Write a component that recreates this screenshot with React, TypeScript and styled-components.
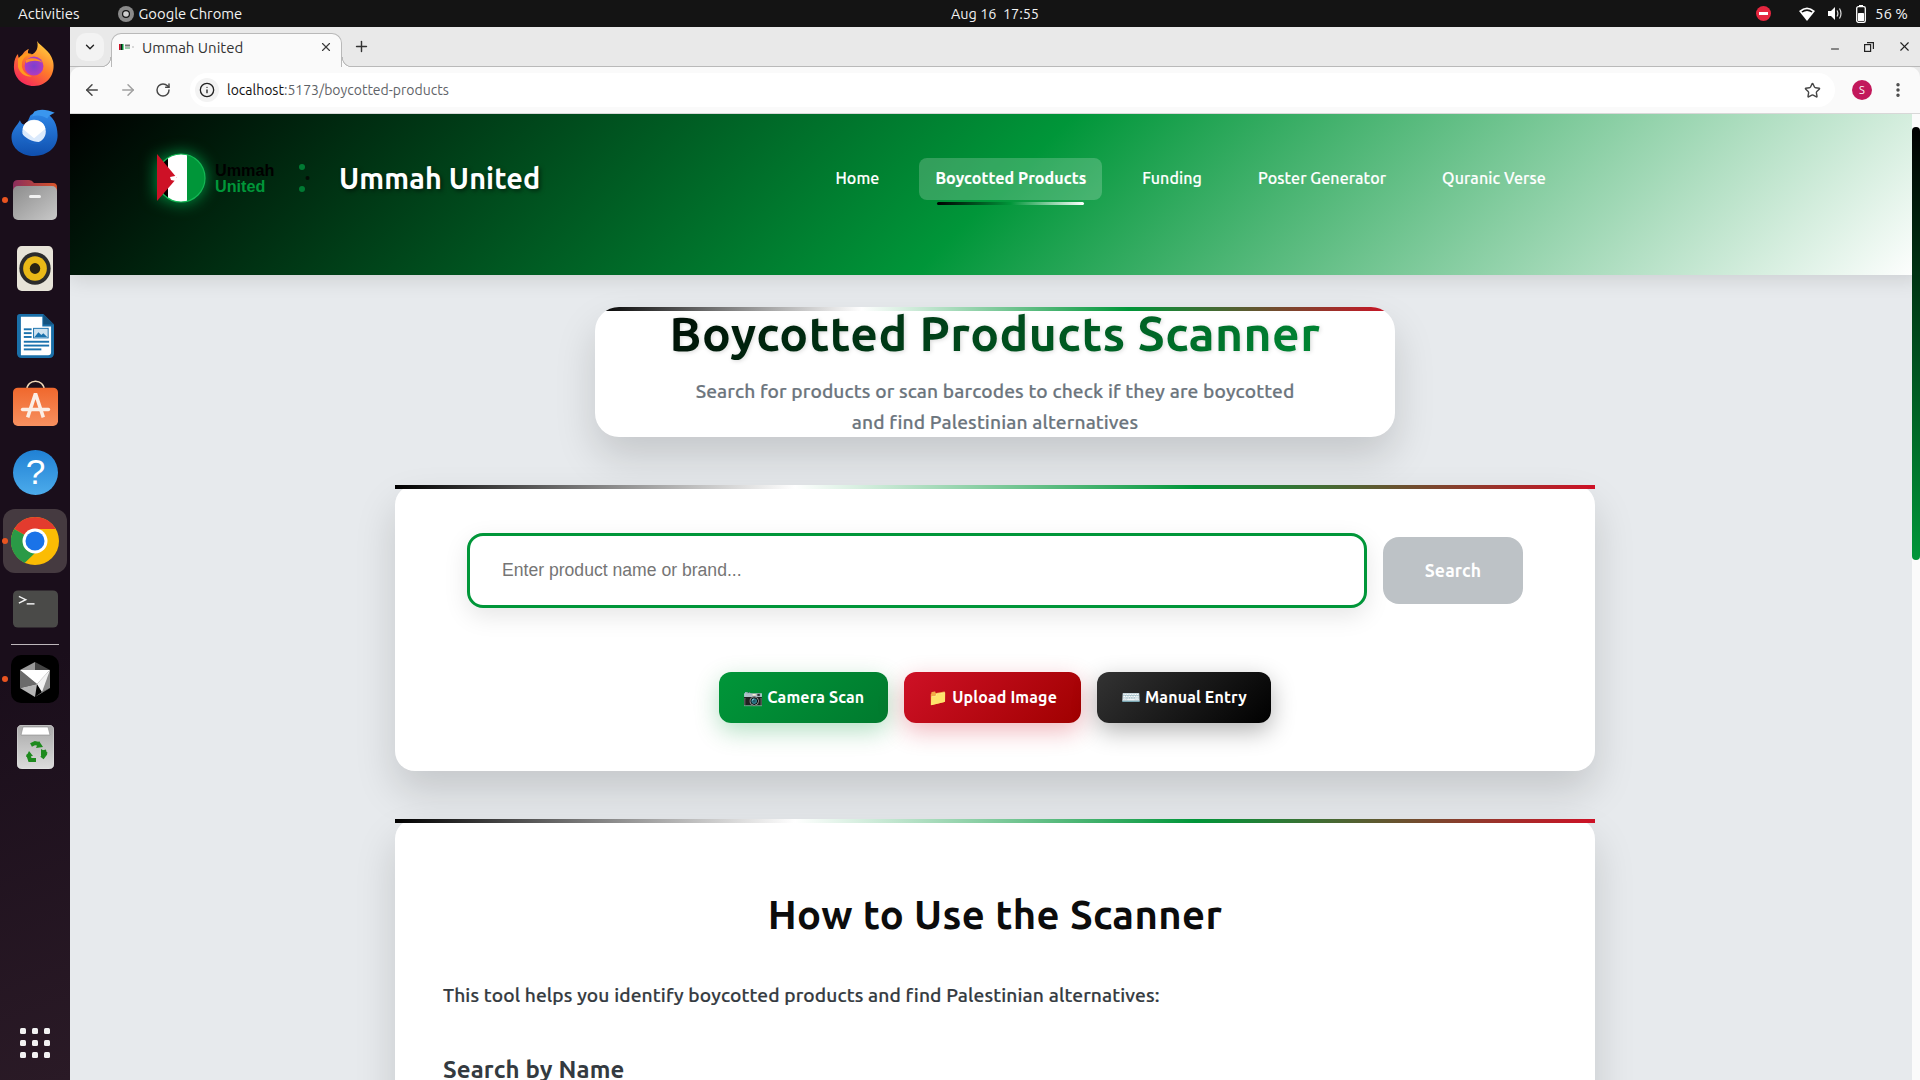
import React from "react";
import styled, { createGlobalStyle } from "styled-components";
import { ArrowLeft, ArrowRight, ChevronDown, EllipsisVertical, Info, Minus, Plus, RotateCw, Star, X } from "lucide-react";

const uiFont = `"Ubuntu", "Lato", "Noto Sans", sans-serif`;
const tracking = "0.008em";

const GlobalStyle = createGlobalStyle`
	html, body {
		margin: 0;
		padding: 0;
		width: 1920px;
		height: 1080px;
		overflow: hidden;
		font-family: ${uiFont};
	}
	* {
		box-sizing: border-box;
	}
`;

const App: React.FC = () => {
	return (
		<Desktop>
			<GlobalStyle />
			<TopBar>
				<TopLeft>
					<TopLabel>Activities</TopLabel>
					<AppName>
						<ChromeGrey />
						<AppLabel>Google Chrome</AppLabel>
					</AppName>
				</TopLeft>
				<TopClock>Aug 16&nbsp;&nbsp;17:55</TopClock>
				<TopRight>
					<DndIcon />
					<WifiIcon />
					<VolumeIcon />
					<BatteryIcon />
					<BatteryText>56 %</BatteryText>
				</TopRight>
			</TopBar>
			<Workspace>
				<Dock>
					<DockItem><FirefoxIcon /></DockItem>
					<DockItem><ThunderbirdIcon /></DockItem>
					<DockItem $running><FilesIcon /></DockItem>
					<DockItem><RhythmboxIcon /></DockItem>
					<DockItem><WriterIcon /></DockItem>
					<DockItem><StoreIcon /></DockItem>
					<DockItem><HelpIcon /></DockItem>
					<DockItem $running $active><ChromeIcon /></DockItem>
					<DockItem><TerminalIcon /></DockItem>
					<DockRule />
					<DockItem $running><CubeIcon /></DockItem>
					<DockItem><TrashIcon /></DockItem>
					<AppGrid>
						{Array.from({ length: 9 }).map((_, i) => (
							<AppGridDot key={i} />
						))}
					</AppGrid>
				</Dock>
				<Browser>
					<TabStrip>
						<TabSearch><ChevronDown size={14} strokeWidth={2.4} /></TabSearch>
						<Tab>
							<Favicon />
							<TabTitle>Ummah United</TabTitle>
							<X size={14} strokeWidth={2} color="#3c3c3c" />
						</Tab>
						<NewTab><Plus size={17} strokeWidth={2} /></NewTab>
						<WindowButtons>
							<MinimizeSlot><Minus size={12} strokeWidth={2} /></MinimizeSlot>
							<RestoreIcon />
							<X size={15} strokeWidth={1.8} />
						</WindowButtons>
					</TabStrip>
					<Toolbar>
						<NavIcons>
							<ArrowLeft size={18} strokeWidth={2} color="#474747" />
							<ArrowRight size={18} strokeWidth={2} color="#a0a0a0" />
							<RotateCw size={16} strokeWidth={2.2} color="#474747" />
						</NavIcons>
						<Omnibox>
							<InfoBadge><Info size={16} strokeWidth={2} color="#222" /></InfoBadge>
							<UrlHost>localhost</UrlHost>
							<UrlRest>:5173/boycotted-products</UrlRest>
							<StarSlot><Star size={17} strokeWidth={2} color="#474747" /></StarSlot>
						</Omnibox>
						<Avatar>S</Avatar>
						<EllipsisVertical size={18} strokeWidth={2.6} color="#474747" />
					</Toolbar>
					<Page>
						<SiteHeader>
							<Brand>
								<LogoImage>
									<LogoMark />
									<LogoWords>
										<span>Ummah</span>
										<LogoGreen>United</LogoGreen>
									</LogoWords>
									<LogoDots />
								</LogoImage>
								<BrandName>Ummah United</BrandName>
							</Brand>
							<Nav>
								<NavLink>Home</NavLink>
								<NavLink $active>Boycotted Products</NavLink>
								<NavLink>Funding</NavLink>
								<NavLink>Poster Generator</NavLink>
								<NavLink>Quranic Verse</NavLink>
							</Nav>
						</SiteHeader>
						<Content>
							<Hero>
								<HeroTitle>Boycotted Products Scanner</HeroTitle>
								<HeroText>Search for products or scan barcodes to check if they are boycotted and find Palestinian alternatives</HeroText>
							</Hero>
							<SearchCard>
								<SearchRow>
									<SearchInput placeholder="Enter product name or brand..." readOnly />
									<SearchButton>Search</SearchButton>
								</SearchRow>
								<ScanRow>
									<ScanButton $kind="green"><Emoji>📷</Emoji> Camera Scan</ScanButton>
									<ScanButton $kind="red"><Emoji>📁</Emoji> Upload Image</ScanButton>
									<ScanButton $kind="black"><Emoji>⌨️</Emoji> Manual Entry</ScanButton>
								</ScanRow>
							</SearchCard>
							<GuideCard>
								<GuideTitle>How to Use the Scanner</GuideTitle>
								<GuideText>This tool helps you identify boycotted products and find Palestinian alternatives:</GuideText>
								<GuideHeading>Search by Name</GuideHeading>
							</GuideCard>
						</Content>
						<ScrollTrack>
							<ScrollThumb />
						</ScrollTrack>
					</Page>
				</Browser>
			</Workspace>
		</Desktop>
	);
};

// DRAWN ICONS
const ChromeGrey = () => (
	<svg width="16" height="16" viewBox="0 0 16 16">
		<circle cx="8" cy="8" r="8" fill="#8a8a8a" />
		<circle cx="8" cy="8" r="4" fill="#141414" />
		<circle cx="8" cy="8" r="2.8" fill="#cfcfcf" />
	</svg>
);

const DndIcon = () => (
	<svg width="15" height="15" viewBox="0 0 15 15" style={{ marginRight: 15 }}>
		<circle cx="7.5" cy="7.5" r="7.5" fill="#e5263f" />
		<rect x="3" y="6" width="9" height="3" fill="#fff" />
	</svg>
);

const WifiIcon = () => (
	<svg width="16" height="14" viewBox="0 0 16 14">
		<path d="M0 4 Q8 -3 16 4 L8 14 Z" fill="#fff" />
		<path d="M2.4 4.4 Q8 0.2 13.6 4.4 L12.6 5.6 Q8 2.4 3.4 5.6 Z" fill="#141414" />
	</svg>
);

const VolumeIcon = () => (
	<svg width="15" height="15" viewBox="0 0 15 15" fill="none">
		<path d="M0 5 H3 L7 1 V14 L3 10 H0 Z" fill="#fff" />
		<path d="M9 4.5 Q10.8 7.5 9 10.5 M11.5 2.5 Q14.5 7.5 11.5 12.5" stroke="#ddd" strokeWidth="1.2" />
	</svg>
);

const BatteryIcon = () => (
	<svg width="10" height="18" viewBox="0 0 10 18" fill="none">
		<rect x="3" y="0" width="4" height="2" fill="#fff" />
		<rect x="0.7" y="1.7" width="8.6" height="15.6" rx="1.6" stroke="#fff" strokeWidth="1.3" />
		<rect x="2" y="8" width="6" height="8" rx="0.6" fill="#fff" />
	</svg>
);

const RestoreIcon = () => (
	<svg width="10" height="10" viewBox="0 0 10 10" fill="none" stroke="#222" strokeWidth="1.2">
		<rect x="0.6" y="2.6" width="6" height="6.8" />
		<path d="M3 0.6 H9.4 V7" />
	</svg>
);

const Favicon = () => (
	<svg width="16" height="8" viewBox="0 0 16 8">
		<rect x="0" y="1" width="1.5" height="6" fill="#ce1126" />
		<rect x="1.5" y="1" width="1.5" height="6" fill="#111" />
		<rect x="3" y="1" width="1.5" height="6" fill="#009639" />
		<rect x="6" y="1.5" width="5" height="2" fill="#777" />
		<rect x="6" y="4" width="5" height="2" fill="#9dc9ac" />
		<circle cx="14" cy="4" r="1" fill="#ccc" />
	</svg>
);

const LogoMark = () => (
	<LogoGlow width="60" height="64" viewBox="11 0 60 64">
		<defs>
			<clipPath id="logoCircle">
				<circle cx="35" cy="32" r="24" />
			</clipPath>
		</defs>
		<g clipPath="url(#logoCircle)">
			<rect x="0" y="0" width="60" height="64" fill="#009639" />
			<rect x="0" y="0" width="22" height="64" fill="#000" />
			<rect x="22" y="0" width="19" height="64" fill="#fff" />
		</g>
		<circle cx="35" cy="32" r="24" fill="none" stroke="#14b855" strokeWidth="1.2" />
		<polygon points="11,8 11,55 31,32" fill="#ce1126" />
		<path d="M24 31 L34 29 L30 32 L40 31 L30 34 L34 36 L25 34 Z" fill="#fff" />
	</LogoGlow>
);

const LogoDots = () => (
	<svg width="12" height="30" viewBox="0 0 12 30">
		<circle cx="3" cy="4" r="3" fill="#007a33" />
		<circle cx="8.5" cy="15" r="2" fill="#040c06" />
		<circle cx="3" cy="26" r="3" fill="#007a33" />
	</svg>
);

const FirefoxIcon = () => (
	<svg width="46" height="46" viewBox="0 0 46 46">
		<defs>
			<linearGradient id="ffOuter" x1="0.8" y1="0" x2="0.2" y2="1">
				<stop offset="0" stopColor="#ffd640" />
				<stop offset="0.5" stopColor="#ff7a2b" />
				<stop offset="1" stopColor="#f5215f" />
			</linearGradient>
			<radialGradient id="ffCore">
				<stop offset="0" stopColor="#7b3fd0" />
				<stop offset="1" stopColor="#b13bc0" />
			</radialGradient>
		</defs>
		<path d="M25 0 C29 6 38 9 41 20 C44 32 36 45 22 45 C9 45 1 35 2 24 C2 19 4 15 6 13 C6 16 7 18 9 19 C9 14 13 9 17 8 C15 11 16 14 19 14 C24 12 27 7 25 0 Z" fill="url(#ffOuter)" />
		<path d="M6 18 C12 10 18 12 22 14 C16 13 11 16 10 22 C9 28 13 34 20 35 C15 37 8 33 6 26 Z" fill="#ff9a1f" />
		<circle cx="22" cy="25" r="9.5" fill="url(#ffCore)" />
		<path d="M14 19 C19 16 27 17 31 22 C26 19 20 19 14 22 Z" fill="#ff8f2a" />
	</svg>
);

const ThunderbirdIcon = () => (
	<svg width="48" height="47" viewBox="0 0 50 50" style={{ marginTop: 1 }}>
		<defs>
			<linearGradient id="tbBlue" x1="0.5" y1="0" x2="0.5" y2="1">
				<stop offset="0" stopColor="#2f88e8" />
				<stop offset="1" stopColor="#0f4fae" />
			</linearGradient>
		</defs>
		<path d="M9 12 C6 18 0 22 0 30 C0 42 11 50 24 50 C38 50 49 41 49 28 C49 16 44 7 36 5 C32 1 25 2 20 7 C18 12 16 15 15 17 C12 17 10 15 9 12 Z" fill="url(#tbBlue)" />
		<path d="M24 3 C29 0 37 0 46 4 C42 6 40 7 38 10 C33 7 27 6 22 8 Z" fill="#3a96ee" />
		<circle cx="24" cy="24" r="12.5" fill="#dbeafc" />
		<path d="M12 21 L24 31 L36 21 C35 15 30 12 24 12 C18 12 13 15 12 21 Z" fill="#fff" />
		<path d="M9 24 C11 39 32 42 42 30 C34 37 20 38 9 24 Z" fill="#1a63c4" />
	</svg>
);

const FilesIcon = () => (
	<svg width="44" height="40" viewBox="0 0 44 40">
		<defs>
			<linearGradient id="folderTop" x1="0" y1="0" x2="1" y2="0">
				<stop offset="0" stopColor="#8a2d5c" />
				<stop offset="1" stopColor="#d8552a" />
			</linearGradient>
			<linearGradient id="folderBody" x1="0" y1="0" x2="1" y2="1">
				<stop offset="0" stopColor="#8d8d8d" />
				<stop offset="1" stopColor="#c8c8c8" />
			</linearGradient>
		</defs>
		<path d="M0 5 Q0 0 5 0 H16 Q19 0 21 3 H40 Q44 3 44 7 V20 H0 Z" fill="url(#folderTop)" />
		<rect x="0" y="6" width="44" height="34" rx="5" fill="url(#folderBody)" />
		<rect x="16" y="15" width="12" height="3" rx="1.5" fill="#f2f2f2" />
	</svg>
);

const RhythmboxIcon = () => (
	<svg width="36" height="45" viewBox="0 0 38 46" preserveAspectRatio="none">
		<rect width="38" height="46" rx="5" fill="#e7e3d8" />
		<circle cx="19" cy="23" r="16.5" fill="#2c2c2c" />
		<circle cx="19" cy="23" r="12.5" fill="#eab917" />
		<circle cx="19" cy="23" r="5.5" fill="#2a2414" />
	</svg>
);

const WriterIcon = () => (
	<svg width="37" height="44" viewBox="0 0 38 46" preserveAspectRatio="none">
		<path d="M3 0 H27 L38 11 V41 Q38 46 33 46 H5 Q0 46 0 41 V3 Q0 0 3 0 Z" fill="#1a6fa8" />
		<path d="M27 0 L38 11 H27 Z" fill="#14527e" />
		<path d="M4 3 H26 V13 H35 V40 Q35 43 32 43 H4 Z" fill="#fff" />
		<g fill="#1a72ad">
			<rect x="7" y="15" width="8" height="2" />
			<rect x="7" y="19" width="8" height="2" />
			<rect x="7" y="23" width="8" height="2" />
			<rect x="7" y="28" width="26" height="2" />
			<rect x="7" y="32" width="26" height="2" />
			<rect x="7" y="36" width="18" height="2" />
		</g>
		<rect x="17" y="15" width="15" height="10" fill="#cfe3f0" stroke="#1a72ad" />
		<path d="M18 24 L22 19 L25 22 L27 20 L31 24 Z" fill="#1a72ad" />
	</svg>
);

const StoreIcon = () => (
	<svg width="45" height="46" viewBox="0 0 46 48" preserveAspectRatio="none" style={{ marginTop: -4 }}>
		<defs>
			<linearGradient id="bag" x1="0" y1="0" x2="0" y2="1">
				<stop offset="0" stopColor="#f0682d" />
				<stop offset="1" stopColor="#f79060" />
			</linearGradient>
		</defs>
		<path d="M14 11 C14 -2 32 -2 32 11" fill="none" stroke="#f0d9b8" strokeWidth="1.6" />
		<rect y="8" width="46" height="40" rx="5" fill="url(#bag)" />
		<path d="M23 14 L15 39 M23 14 L31 39" stroke="#fbeee6" strokeWidth="3.6" />
		<rect x="8" y="29" width="30" height="3.6" rx="1.8" fill="#fbeee6" />
	</svg>
);

const HelpIcon = () => (
	<svg width="45" height="45" viewBox="0 0 46 46">
		<defs>
			<linearGradient id="help" x1="0" y1="0" x2="0" y2="1">
				<stop offset="0" stopColor="#2081d4" />
				<stop offset="1" stopColor="#4cabeb" />
			</linearGradient>
		</defs>
		<circle cx="23" cy="23" r="23" fill="url(#help)" />
		<text x="23" y="35" textAnchor="middle" fontSize="36" fontFamily="Liberation Sans, sans-serif" fill="#fff">?</text>
	</svg>
);

const ChromeIcon = () => (
	<svg width="48" height="48" viewBox="0 0 48 48">
		<circle cx="24" cy="24" r="24" fill="#fbbc04" />
		<path d="M24 0 A24 24 0 0 1 44.8 12 L24 12 A12 12 0 0 0 13.6 18 L3.2 12 A24 24 0 0 1 24 0 Z" fill="#e33b2e" />
		<path d="M3.2 12 L13.6 18 A12 12 0 0 0 24 36 L13.6 46 A24 24 0 0 1 3.2 12 Z" fill="#2a9a46" />
		<circle cx="24" cy="24" r="12.5" fill="#fff" />
		<circle cx="24" cy="24" r="9.5" fill="#1a73e8" />
	</svg>
);

const TerminalIcon = () => (
	<svg width="45" height="38" viewBox="0 0 46 38">
		<rect width="46" height="38" rx="5" fill="#4a4a48" />
		<path d="M6 6 L13 9.5 L6 13" fill="none" stroke="#f2f2f2" strokeWidth="1.5" />
		<rect x="14" y="13" width="8" height="1.5" fill="#f2f2f2" />
	</svg>
);

const CubeIcon = () => (
	<svg width="48" height="48" viewBox="0 0 48 48">
		<rect width="48" height="48" rx="10" fill="#000" />
		<polygon points="24,7 9,15 24,15" fill="#9a9a9a" />
		<polygon points="24,7 39,15 24,15" fill="#454545" />
		<polygon points="9,15 9,33 26,29" fill="#6a6a6a" />
		<polygon points="9,33 24,42 26,29" fill="#b4b4b4" />
		<polygon points="39,15 39,33 31,37 26,29" fill="#8c8c8c" />
		<polygon points="39,15 31,37 26,29" fill="#f2f2f2" />
		<polygon points="24,42 39,33 31,37" fill="#a8a8a8" />
		<polygon points="9,15 39,15 26,29" fill="#fff" />
	</svg>
);

const TrashIcon = () => (
	<svg width="37" height="44" viewBox="0 0 37 44">
		<defs>
			<linearGradient id="bin" x1="0" y1="0" x2="0" y2="1">
				<stop offset="0" stopColor="#a9a9a9" />
				<stop offset="1" stopColor="#dcdcdc" />
			</linearGradient>
		</defs>
		<rect width="37" height="44" rx="5" fill="url(#bin)" stroke="#efefef" strokeWidth="0.6" />
		<path d="M6 2 H31 L33 10 H4 Z" fill="#fff" stroke="#888" strokeWidth="0.6" />
		<g fill="none" stroke="#1e8a1e" strokeWidth="4">
			<path d="M14 20 L18 18 L22 19" />
			<path d="M27 25 L28 29 L25 33" />
			<path d="M19 35 L13 35 L11 29" />
		</g>
		<g fill="#1e8a1e">
			<polygon points="22,16 26,22 19,23" />
			<polygon points="31,28 24,31 24,24" />
			<polygon points="9,32 12,26 16,31" />
		</g>
	</svg>
);

// LAYOUT
const Desktop = styled.div`
	width: 1920px;
	height: 1080px;
	display: flex;
	flex-direction: column;
	overflow: hidden;
	background: #1d0f1f;
`;

const TopBar = styled.header`
	height: 27px;
	flex: none;
	background: #141414;
	color: #f2f2f2;
	display: grid;
	grid-template-columns: 1fr auto 1fr;
	align-items: center;
	padding: 0 12px 0 18px;
`;

const TopLeft = styled.div`
	display: flex;
	align-items: center;
	gap: 36px;
`;

const AppName = styled.div`
	display: flex;
	align-items: center;
	gap: 5px;
	margin-left: 2px;
`;

const TopLabel = styled.span`
	font-size: 15px;
`;

const AppLabel = styled(TopLabel)`
	font-size: 14.8px;
`;

const BatteryText = styled(TopLabel)`
	margin-left: -4px;
`;

const TopClock = styled.div`
	font-size: 14.4px;
	padding-left: 64px;
`;

const TopRight = styled.div`
	display: flex;
	align-items: center;
	justify-content: flex-end;
	gap: 13px;
`;

const Workspace = styled.div`
	flex: 1;
	display: flex;
	min-height: 0;
`;

const Dock = styled.nav`
	width: 70px;
	flex: none;
	display: flex;
	flex-direction: column;
	align-items: center;
	padding-top: 3px;
	background: linear-gradient(160deg, #1a0e1b 60%, #2a1a26 100%);
`;

const DockItem = styled.div<{ $running?: boolean; $active?: boolean }>`
	position: relative;
	width: 64px;
	height: 68.1px;
	flex: none;
	display: flex;
	align-items: center;
	justify-content: center;

	${({ $active }) =>
		$active &&
		`
		&::before {
			content: "";
			position: absolute;
			inset: 2px 0;
			border-radius: 12px;
			background: #453a40;
		}
		& > svg {
			position: relative;
		}
	`}

	${({ $running }) =>
		$running &&
		`
		&::after {
			content: "";
			position: absolute;
			left: -1px;
			top: 31px;
			width: 6px;
			height: 6px;
			border-radius: 50%;
			background: #e95420;
		}
	`}
`;

const DockRule = styled.div`
	width: 48px;
	height: 1px;
	flex: none;
	margin-top: 1px;
	background: #bdb7bb;
`;

const AppGrid = styled.div`
	margin-top: auto;
	margin-bottom: 22px;
	display: grid;
	grid-template-columns: repeat(3, 6px);
	gap: 6px;
`;

const AppGridDot = styled.span`
	width: 6px;
	height: 6px;
	border-radius: 1.5px;
	background: #f2f2f2;
`;

const Browser = styled.div`
	flex: 1;
	min-width: 0;
	display: flex;
	flex-direction: column;
	background: #e9e9e9;
`;

const TabStrip = styled.div`
	height: 40px;
	flex: none;
	background: #e9e9e9;
	display: flex;
	align-items: flex-end;
	padding-left: 6px;
	border-bottom: 1px solid #b9b9b9;
	color: #222;
`;

const TabSearch = styled.div`
	width: 28px;
	height: 28px;
	margin-bottom: 5px;
	border-radius: 10px;
	background: #f3f3f3;
	display: flex;
	align-items: center;
	justify-content: center;
`;

const Tab = styled.div`
	position: relative;
	width: 231px;
	height: 34px;
	margin-left: 7px;
	margin-bottom: -1px;
	padding: 0 8px 7px 7px;
	background: #fafafa;
	border: 1px solid #b9b9b9;
	border-bottom: none;
	border-radius: 10px 10px 0 0;
	display: flex;
	align-items: center;
	gap: 7px;

	&::before,
	&::after {
		content: "";
		position: absolute;
		bottom: 0;
		width: 10px;
		height: 10px;
	}

	&::before {
		left: -11px;
		background: radial-gradient(circle at 0 0, transparent 9px, #b9b9b9 9.5px, #b9b9b9 10px, #fafafa 10.5px);
	}

	&::after {
		right: -11px;
		background: radial-gradient(circle at 100% 0, transparent 9px, #b9b9b9 9.5px, #b9b9b9 10px, #fafafa 10.5px);
	}
`;

const TabTitle = styled.span`
	flex: 1;
	font-size: 15px;
	color: #333;
`;

const NewTab = styled.div`
	width: 38px;
	height: 34px;
	padding-bottom: 6px;
	display: flex;
	align-items: center;
	justify-content: center;
	color: #333;
`;

const WindowButtons = styled.div`
	margin-left: auto;
	height: 39px;
	width: 91px;
	display: flex;
	align-items: center;
	justify-content: space-between;
	padding: 0 8px 0 0;
	align-self: flex-start;
`;

const MinimizeSlot = styled.div`
	display: flex;
	padding-top: 4px;
`;

const Toolbar = styled.div`
	height: 47px;
	flex: none;
	background: #fafafa;
	border-bottom: 1px solid #d8d8d8;
	border-radius: 10px 10px 0 0;
	display: flex;
	align-items: center;
	padding-right: 13px;
`;

const NavIcons = styled.div`
	width: 120px;
	padding-left: 13px;
	display: flex;
	align-items: center;
	gap: 18px;
`;

const Omnibox = styled.div`
	width: 1645px;
	height: 34px;
	border-radius: 17px;
	background: #fff;
	display: flex;
	align-items: center;
	padding-left: 5px;
	font-size: 14px;
`;

const InfoBadge = styled.div`
	width: 24px;
	height: 24px;
	border-radius: 50%;
	background: #f3f3f3;
	display: flex;
	align-items: center;
	justify-content: center;
	margin-right: 8px;
`;

const UrlHost = styled.span`
	color: #111;
`;

const UrlRest = styled.span`
	color: #5f6368;
`;

const StarSlot = styled.div`
	margin-left: auto;
	padding-right: 14px;
	display: flex;
`;

const Avatar = styled.div`
	width: 20px;
	height: 20px;
	margin: 0 17px 0 17px;
	border-radius: 50%;
	background: #c2185b;
	color: #fff;
	font-size: 11px;
	display: flex;
	align-items: center;
	justify-content: center;
`;

const Page = styled.main`
	position: relative;
	flex: 1;
	min-height: 0;
	overflow: hidden;
	background: #e7eaed;
`;

const SiteHeader = styled.div`
	height: 161px;
	background: linear-gradient(135deg, #000 0%, #009639 50%, #fff 100%);
	box-shadow: 0 4px 20px rgba(0, 0, 0, 0.12);
	display: flex;
	align-items: flex-start;
	padding: 44px 0 0 87px;
`;

const Brand = styled.div`
	display: flex;
	align-items: center;
	height: 40px;
`;

const LogoImage = styled.div`
	display: flex;
	align-items: center;
	width: 182px;
`;

const LogoGlow = styled.svg`
	filter: drop-shadow(0 0 8px rgba(0, 210, 95, 0.7));
`;

const LogoWords = styled.div`
	margin-left: -2px;
	width: 84px;
	font-family: "Liberation Sans", sans-serif;
	font-weight: 700;
	font-size: 16.2px;
	line-height: 16px;
	color: #000;
	display: flex;
	flex-direction: column;
`;

const LogoGreen = styled.span`
	color: #009639;
`;

const BrandName = styled.div`
	font-size: 28.8px;
	font-weight: 700;
	letter-spacing: 0.004em;
	color: #fff;
	text-shadow: 2px 2px 4px rgba(0, 0, 0, 0.5);
`;

const Nav = styled.div`
	display: flex;
	gap: 24px;
	margin-left: 279px;
`;

const NavLink = styled.div<{ $active?: boolean }>`
	position: relative;
	height: 42px;
	padding: 0 16px 2px;
	border-radius: 8px;
	display: flex;
	align-items: center;
	font-size: 16px;
	font-weight: 500;
	letter-spacing: 0.006em;
	-webkit-text-stroke: 0.15px #fff;
	color: #fff;
	background: ${({ $active }) => ($active ? "rgba(255, 255, 255, 0.2)" : "transparent")};

	${({ $active }) =>
		$active &&
		`
		font-weight: 700;
		&::after {
			content: "";
			position: absolute;
			left: 18px;
			right: 18px;
			bottom: -5px;
			height: 3px;
			border-radius: 2px;
			background: linear-gradient(90deg, #000, #009639, #fff);
		}
	`}
`;

const Content = styled.div`
	display: flex;
	flex-direction: column;
	align-items: center;
	padding-top: 32px;
	letter-spacing: ${tracking};
`;

const flagBar = `
	content: "";
	position: absolute;
	top: 0;
	left: 0;
	right: 0;
	height: 4px;
	background: linear-gradient(90deg, #000, #fff, #009639, #ce1126);
`;

const cardShadow = "0 20px 40px rgba(0, 0, 0, 0.15)";

const Hero = styled.section`
	position: relative;
	width: 800px;
	height: 130px;
	background: #fff;
	border-radius: 24px;
	overflow: hidden;
	text-align: center;
	margin-bottom: 48px;
	box-shadow: ${cardShadow};

	&::before {
		${flagBar}
	}
`;

const HeroTitle = styled.h1`
	margin: -3px 0 14px;
	font-size: 48px;
	line-height: 58px;
	font-weight: 700;
	letter-spacing: 0.01em;
	background: linear-gradient(135deg, #000, #009639);
	-webkit-background-clip: text;
	background-clip: text;
	color: transparent;
	filter: drop-shadow(1px 1px 2px rgba(0, 0, 0, 0.15));
`;

const HeroText = styled.p`
	margin: 0 auto;
	width: 620px;
	font-size: 19.2px;
	line-height: 31px;
	font-weight: 500;
	-webkit-text-stroke: 0.2px #6c757d;
	color: #6c757d;
`;

const Card = styled.section`
	position: relative;
	width: 1200px;
	background: #fff;
	border-radius: 20px;
	box-shadow: ${cardShadow};

	&::before {
		${flagBar}
	}
`;

const SearchCard = styled(Card)`
	height: 286px;
	padding: 48px 72px;
	margin-bottom: 48px;
`;

const SearchRow = styled.div`
	display: flex;
	align-items: center;
	gap: 16px;
`;

const SearchInput = styled.input`
	width: 900px;
	height: 75px;
	border: 3px solid #009639;
	border-radius: 16px;
	padding: 0 32px;
	outline: none;
	font-family: "Liberation Sans", sans-serif;
	font-size: 17.6px;
	box-shadow: 0 8px 25px rgba(0, 0, 0, 0.1);

	&::placeholder {
		color: #757575;
	}
`;

const SearchButton = styled.button`
	width: 140px;
	height: 67px;
	border: none;
	border-radius: 16px;
	background: #bdc2c6;
	color: #fff;
	font-family: ${uiFont};
	font-size: 17.6px;
	font-weight: 700;
	letter-spacing: ${tracking};
`;

const ScanRow = styled.div`
	display: flex;
	justify-content: center;
	gap: 16px;
	margin-top: 64px;
`;

const scanColors = {
	green: "linear-gradient(135deg, #009639, #007a2e); box-shadow: 0 8px 25px rgba(0, 150, 57, 0.3)",
	red: "linear-gradient(135deg, #ce1126, #a00000); box-shadow: 0 8px 25px rgba(206, 17, 38, 0.3)",
	black: "linear-gradient(135deg, #333, #000); box-shadow: 0 8px 25px rgba(0, 0, 0, 0.3)",
};

const ScanButton = styled.button<{ $kind: keyof typeof scanColors }>`
	height: 51px;
	padding: 0 24px;
	border: none;
	border-radius: 12px;
	color: #fff;
	font-family: ${uiFont};
	font-size: 16px;
	font-weight: 700;
	letter-spacing: ${tracking};
	background: ${({ $kind }) => scanColors[$kind]};
`;

const Emoji = styled.span`
	font-family: "Noto Color Emoji", sans-serif;
`;

const GuideCard = styled(Card)`
	height: 600px;
	padding: 48px;
`;

const GuideTitle = styled.h2`
	margin: 24px 0 0;
	text-align: center;
	font-size: 40px;
	line-height: 48px;
	font-weight: 700;
	letter-spacing: 0.01em;
	color: #0c0c0c;
`;

const GuideText = styled.p`
	margin: 41px 0 0;
	font-size: 19.2px;
	line-height: 30px;
	font-weight: 500;
	-webkit-text-stroke: 0.2px #343a40;
	color: #343a40;
`;

const GuideHeading = styled.h3`
	margin: 45px 0 0;
	font-size: 24px;
	line-height: 30px;
	font-weight: 700;
	color: #343a40;
`;

const ScrollTrack = styled.div`
	position: absolute;
	top: 0;
	right: 0;
	bottom: 0;
	width: 8px;
	padding-top: 13px;
	background: #fbfbfb;
`;

const ScrollThumb = styled.div`
	height: 433px;
	border-radius: 4px;
	background: linear-gradient(180deg, #000, #009639);
`;

export default App;
